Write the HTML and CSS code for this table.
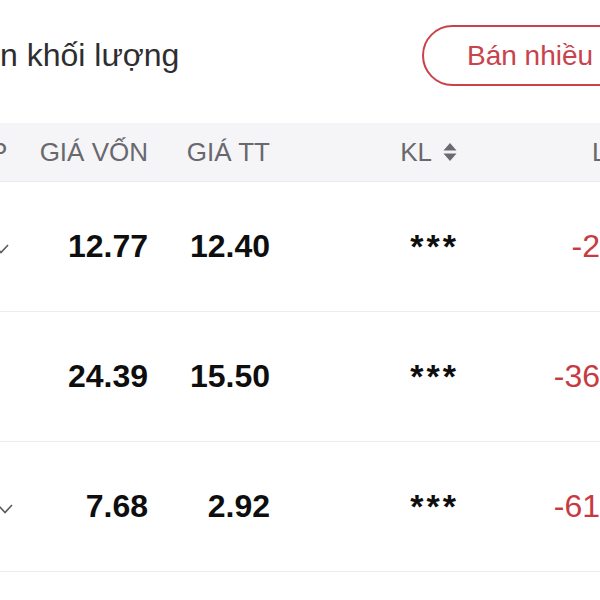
FILE: index.html
```html
<!DOCTYPE html>
<html lang="vi">
<head>
<meta charset="utf-8">
<link rel="stylesheet" href="styles.css">
</head>
<body>
<div class="page">
  <div class="topbar">
    <div class="title">n khối lượng</div>
    <button class="btn-outline">Bán nhiều</button>
  </div>
  <div class="table">
    <div class="row head">
      <div class="cell c0">P</div>
      <div class="cell c1">GIÁ VỐN</div>
      <div class="cell c2">GIÁ TT</div>
      <div class="cell c3 sort">KL
        <svg class="sort-icon" width="14" height="18" viewBox="0 0 14 18"><path d="M7 0 L13.5 7.5 H0.5 Z M7 18 L13.5 10.5 H0.5 Z" fill="#6a6a70"/></svg>
      </div>
      <div class="cell c4">LÃI/LỖ</div>
    </div>
    <div class="row body">
      <div class="cell c0"><svg class="chev chev-a" width="16" height="10" viewBox="0 0 16 10"><path d="M1 1 L8 8.5 L15 1" fill="none" stroke="#5a5a5e" stroke-width="1.6"/></svg></div>
      <div class="cell c1 num">12.77</div>
      <div class="cell c2 num">12.40</div>
      <div class="cell c3 mask">***</div>
      <div class="cell c4 neg">-2.90%</div>
    </div>
    <div class="row body">
      <div class="cell c0"></div>
      <div class="cell c1 num">24.39</div>
      <div class="cell c2 num">15.50</div>
      <div class="cell c3 mask">***</div>
      <div class="cell c4 neg">-36.45%</div>
    </div>
    <div class="row body">
      <div class="cell c0"><svg class="chev chev-b" width="16" height="10" viewBox="0 0 16 10"><path d="M1 1 L8 8.5 L15 1" fill="none" stroke="#5a5a5e" stroke-width="1.6"/></svg></div>
      <div class="cell c1 num">7.68</div>
      <div class="cell c2 num">2.92</div>
      <div class="cell c3 mask">***</div>
      <div class="cell c4 neg">-61.98%</div>
    </div>
    <div class="row body"></div>
  </div>
</div>
</body>
</html>
```
FILE: styles.css
```css
html, body {
  margin: 0;
  padding: 0;
  overflow: hidden;
  background: #ffffff;
}
body {
  font-family: "Liberation Sans", Arial, sans-serif;
  color: #111;
}
.page {
  width: 673px;
}
.topbar {
  display: grid;
  grid-template-columns: 422px auto;
  align-items: center;
  padding: 25px 0 37px 0;
}
.title {
  font-size: 32px;
  color: #2e2e30;
  line-height: 61px;
  white-space: nowrap;
}
.btn-outline {
  justify-self: start;
  height: 61px;
  width: 244px;
  box-sizing: border-box;
  border: 2px solid #c8434c;
  border-radius: 31px;
  background: #fff;
  color: #c8434c;
  font-family: "Liberation Sans", Arial, sans-serif;
  font-size: 28px;
  text-align: left;
  padding: 0 0 0 43px;
}
.row {
  display: grid;
  grid-template-columns: 20px 128px 122px 186px 217px;
  align-items: center;
}
.head {
  height: 58px;
  background: #f5f5f8;
  border-bottom: 1px solid #e7e7ec;
  color: #68686d;
  font-size: 26px;
}
.body {
  height: 129px;
  border-bottom: 1px solid #ececee;
}
.cell {
  text-align: right;
  white-space: nowrap;
}
.head .c0 {
  text-align: left;
  margin-left: -10px;
}
.body .c0 {
  text-align: left;
  height: 10px;
}
.chev {
  display: block;
}
.chev-a {
  margin-left: -7px;
  margin-top: 2px;
}
.chev-b {
  margin-left: -3px;
  margin-top: 2px;
}
.sort {
  display: flex;
  justify-content: flex-end;
  align-items: center;
  gap: 11px;
}
.sort-icon {
  display: block;
  margin-right: -1px;
}
.num {
  font-size: 32px;
  font-weight: bold;
  color: #0e0e0e;
}
.mask {
  font-size: 34px;
  font-weight: bold;
  letter-spacing: 3px;
  margin-right: -3px;
  color: #0e0e0e;
}
.neg {
  font-size: 32px;
  color: #c83a42;
}
```
